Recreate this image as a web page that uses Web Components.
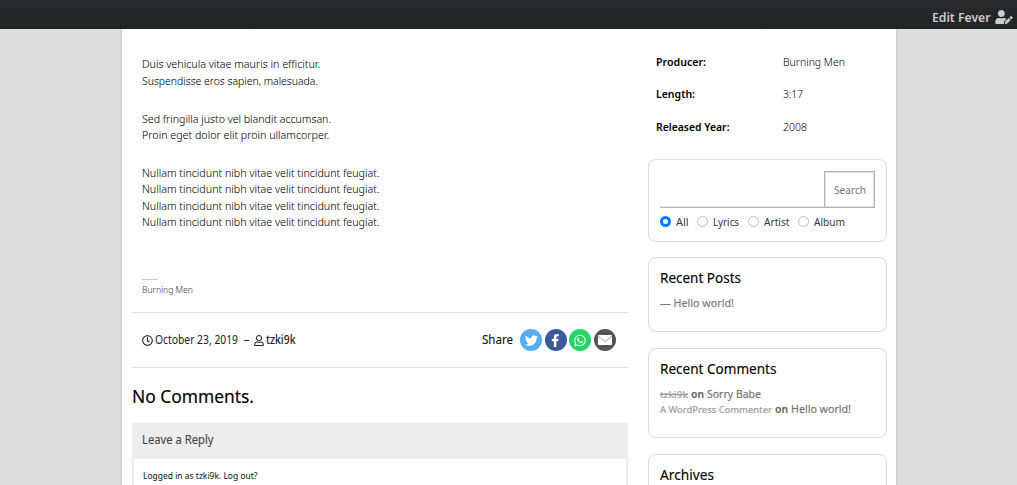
<!DOCTYPE html>
<html lang="en"><head><meta charset="utf-8"><title>Fever</title>
<style>
html,body{margin:0;height:485px;overflow:hidden}
body{font-family:"Noto Sans","Open Sans",sans-serif;background:#dcdcdc;color:#212529}
</style></head><body>
<song-page></song-page>
<script>
const define=(name,html,init)=>customElements.define(name,class extends HTMLElement{
  constructor(){super();this.attachShadow({mode:'open'}).innerHTML=html;}
  connectedCallback(){if(init)init(this,this.shadowRoot);}
});

/* A single line of text condensed to a given measure (data-w). */
define('fit-text','<style>:host{display:block;white-space:nowrap}:host([struck]) span{text-decoration:line-through}span{display:inline-block;transform-origin:0 50%}</style><span><slot></slot></span>',(el,root)=>{
  const s=root.querySelector('span'),w=+el.dataset.w,n=s.getBoundingClientRect().width;
  if(w&&n){s.style.transform='scaleX('+(w/n)+')';s.style.marginRight=(w-n)+'px';}
});

const ICONS={
 clock:['0 0 512 512','M256 8C119 8 8 119 8 256s111 248 248 248 248-111 248-248S393 8 256 8zm0 448c-110.500 0-200-89.500-200-200S145.500 56 256 56s200 89.500 200 200-89.500 200-200 200zm61.800-104.400l-84.900-61.700c-3.100-2.300-4.900-5.900-4.900-9.700V116c0-6.600 5.400-12 12-12h32c6.600 0 12 5.400 12 12v141.700l66.800 48.600c5.400 3.900 6.500 11.400 2.600 16.800L334.600 349c-3.900 5.300-11.400 6.500-16.800 2.600z'],
 user:['0 0 448 512','M313.600 304c-28.700 0-42.500 16-89.600 16-47.100 0-60.800-16-89.600-16C60.200 304 0 364.200 0 438.400V464c0 26.500 21.500 48 48 48h352c26.500 0 48-21.500 48-48v-25.600c0-74.200-60.200-134.400-134.400-134.400zM400 464H48v-25.600c0-47.600 38.800-86.400 86.400-86.400 14.600 0 38.300 16 89.600 16 51.700 0 74.900-16 89.600-16 47.600 0 86.400 38.800 86.400 86.400V464zM224 288c79.500 0 144-64.500 144-144S303.500 0 224 0 80 64.500 80 144s64.500 144 144 144zm0-240c52.900 0 96 43.100 96 96s-43.100 96-96 96-96-43.100-96-96 43.100-96 96-96z'],
 edit:['0 0 640 512','M224 256c70.700 0 128-57.300 128-128S294.700 0 224 0 96 57.300 96 128s57.300 128 128 128zm89.600 32h-16.700c-22.200 10.200-46.900 16-72.900 16s-50.600-5.800-72.900-16h-16.700C60.200 288 0 348.200 0 422.400V464c0 26.500 21.500 48 48 48h274.900c-2.400-6.800-3.400-14-2.600-21.300l6.800-60.900 1.200-11.100 7.900-7.900 77.300-77.300c-24.500-27.700-60-45.500-99.900-45.500zm45.300 145.300l-6.800 61c-1.100 10.200 7.500 18.800 17.600 17.600l60.900-6.800 137.900-137.900-71.700-71.700-137.900 137.800zM633 268.900L595.100 231c-9.300-9.300-24.500-9.300-33.800 0l-37.800 37.800-4.100 4.100 71.800 71.700 41.800-41.800c9.300-9.400 9.300-24.500 0-33.900z'],
 twitter:['0 0 512 512','M459.370 151.716c.325 4.548.325 9.097.325 13.645 0 138.720-105.583 298.558-298.558 298.558-59.452 0-114.680-17.219-161.137-47.106 8.447.974 16.568 1.299 25.340 1.299 49.055 0 94.213-16.568 130.274-44.832-46.132-.975-84.792-31.188-98.112-72.772 6.498.974 12.995 1.624 19.818 1.624 9.421 0 18.843-1.300 27.614-3.573-48.081-9.747-84.143-51.980-84.143-102.985v-1.299c13.969 7.797 30.214 12.670 47.431 13.319-28.264-18.843-46.781-51.005-46.781-87.391 0-19.492 5.197-37.360 14.294-52.954 51.655 63.675 129.300 105.258 216.365 109.807-1.624-7.797-2.599-15.918-2.599-24.040 0-57.828 46.782-104.934 104.934-104.934 30.213 0 57.502 12.670 76.670 33.137 23.715-4.548 46.456-13.320 66.599-25.340-7.798 24.366-24.366 44.833-46.132 57.827 21.117-2.273 41.584-8.122 60.426-16.243-14.292 20.791-32.161 39.308-52.628 54.253z'],
 facebook:['0 0 320 512','M279.140 288l14.220-92.660h-88.910v-60.130c0-25.350 12.420-50.060 52.240-50.060h40.420V6.260S260.430 0 225.360 0c-73.220 0-121.080 44.380-121.080 124.720v70.620H22.890V288h81.390v224h100.170V288z'],
 whatsapp:['0 0 448 512','M380.900 97.100C339 55.100 283.200 32 223.900 32c-122.400 0-222 99.600-222 222 0 39.100 10.200 77.300 29.600 111L0 480l117.700-30.900c32.400 17.700 68.900 27 106.100 27h.1c122.300 0 224.100-99.600 224.100-222 0-59.300-25.200-115-67.100-157zm-157 341.600c-33.200 0-65.700-8.900-94-25.700l-6.700-4-69.800 18.300L72 359.200l-4.400-7c-18.500-29.400-28.200-63.300-28.200-98.200 0-101.700 82.800-184.500 184.600-184.500 49.300 0 95.600 19.200 130.400 54.100 34.800 34.900 56.200 81.200 56.100 130.500 0 101.800-84.900 184.600-186.600 184.600zm101.200-138.200c-5.500-2.800-32.800-16.200-37.900-18-5.100-1.900-8.800-2.800-12.500 2.800-3.700 5.600-14.300 18-17.600 21.800-3.200 3.700-6.500 4.200-12 1.400-32.600-16.300-54-29.100-75.500-66-5.700-9.800 5.700-9.100 16.300-30.300 1.800-3.700.9-6.900-.5-9.700-1.400-2.800-12.500-30.100-17.100-41.200-4.500-10.800-9.100-9.300-12.500-9.500-3.200-.2-6.900-.2-10.600-.2-3.700 0-9.700 1.400-14.800 6.900-5.100 5.600-19.400 19-19.400 46.300 0 27.300 19.900 53.700 22.600 57.400 2.800 3.700 39.100 59.700 94.800 83.800 35.200 15.200 49 16.500 66.600 13.900 10.700-1.600 32.800-13.400 37.400-26.400 4.600-13 4.600-24.100 3.200-26.400-1.300-2.500-5-3.900-10.500-6.600z'],
 mail:['0 0 14 10','M0 1Q0 0 1 0H13Q14 0 14 1L7.600 5.900Q7 6.300 6.400 5.900ZM0 1.500L6.100 6.300Q7 6.900 7.900 6.300L14 1.500V9Q14 10 13 10H1Q0 10 0 9Z']
};
define('ui-icon','<style>:host{display:block;flex:none}svg{display:block;width:100%;height:100%;fill:currentColor}</style><svg><path/></svg>',(el,root)=>{
  const [box,d]=ICONS[el.getAttribute('name')];
  root.querySelector('svg').setAttribute('viewBox',box);root.querySelector('path').setAttribute('d',d);
});

define('admin-bar',`<style>
:host{display:flex;justify-content:flex-end;align-items:center;box-sizing:border-box;height:29px;padding:5px 4px 0 0;background:linear-gradient(#292a2c,#222326);color:#ccc;font-weight:600;font-size:12.700px;line-height:22px}
ui-icon{width:18px;height:14px;margin-left:5px}</style>
<fit-text data-w="58.500">Edit Fever</fit-text><ui-icon name="edit"></ui-icon>`);

define('song-lyrics',`<style>
:host{display:block;padding:27.400px 10.500px 0 10.400px;font-size:11.600px;line-height:16.300px;font-weight:300;-webkit-text-stroke:.05px;color:#000;height:284px;box-sizing:border-box}
p{margin:0 0 21.800px}
footer{margin-top:49px;font-size:9.300px;line-height:20px;color:#444}
footer::before{content:"";display:block;width:16px;height:1px;background:#c8c8c8}</style>
<p><fit-text data-w="178">Duis vehicula vitae mauris in efficitur.</fit-text><fit-text data-w="176">Suspendisse eros sapien, malesuada.</fit-text></p>
<p><fit-text data-w="189">Sed fringilla justo vel blandit accumsan.</fit-text><fit-text data-w="187">Proin eget dolor elit proin ullamcorper.</fit-text></p>
<p style="margin:0"><fit-text data-w="237.500">Nullam tincidunt nibh vitae velit tincidunt feugiat.</fit-text><fit-text data-w="237.500">Nullam tincidunt nibh vitae velit tincidunt feugiat.</fit-text><fit-text data-w="237.500">Nullam tincidunt nibh vitae velit tincidunt feugiat.</fit-text><fit-text data-w="237.500">Nullam tincidunt nibh vitae velit tincidunt feugiat.</fit-text></p>
<footer><fit-text data-w="51">Burning Men</fit-text></footer>`);

define('post-meta',`<style>
:host{display:flex;align-items:center;box-sizing:border-box;height:56px;border:solid #e3e3e3;border-width:1px 0;padding:0 12.500px 0 10.400px;font-size:12px;line-height:16px;color:#212121}
.c{width:11px;height:11px;margin-right:2px}.u{width:10px;height:11px;margin-right:2px}
.d{margin:0 5px}.n{font-weight:500}
.s{margin-left:auto;margin-right:7px;color:#111;-webkit-text-stroke:.1px}
i{display:grid;place-items:center;width:22px;height:22px;border-radius:50%;color:#fff;margin-left:2.400px}
</style><ui-icon class="c" name="clock"></ui-icon><fit-text data-w="83">October 23, 2019</fit-text><span class="d">–</span><ui-icon class="u" name="user"></ui-icon><fit-text class="n" data-w="29.500">tzki9k</fit-text>
<fit-text class="s" data-w="31">Share</fit-text>
<i style="background:#55acee;margin-left:0"><ui-icon name="twitter" style="width:13px;height:13px"></ui-icon></i>
<i style="background:#3b5998"><ui-icon name="facebook" style="width:8.500px;height:13px"></ui-icon></i>
<i style="background:#25d366"><ui-icon name="whatsapp" style="width:12px;height:13px"></ui-icon></i>
<i style="background:#555"><ui-icon name="mail" style="width:14px;height:10px"></ui-icon></i>`);

define('comment-area',`<style>
:host{display:block}
h2{margin:0;padding-top:15px;font-size:18px;line-height:26px;font-weight:400;-webkit-text-stroke:.15px;color:#000;height:40px}
.box{border:2px solid #ededed;box-sizing:border-box;height:90px}
header{height:34px;background:#ededed;font-size:12px;line-height:30px;font-weight:400;-webkit-text-stroke:.1px;color:#444;padding-left:8px}
.in{padding:8px 9px;font-size:9.700px;line-height:18px;color:#111}</style>
<h2><fit-text data-w="122">No Comments.</fit-text></h2>
<div class="box"><header><fit-text data-w="71.500">Leave a Reply</fit-text></header><div class="in"><fit-text data-w="114.500">Logged in as tzki9k. Log out?</fit-text></div></div>`);

define('song-facts',`<style>
:host{display:grid;grid-template-columns:126.500px 1fr;grid-auto-rows:32.400px;align-items:center;padding:16.700px 0 0 8.400px;font-size:11.600px;line-height:16px;height:130px;box-sizing:border-box;color:#000}
b{font-weight:600;font-size:11.300px}span{font-weight:300}</style>
<b><fit-text data-w="50">Producer:</fit-text></b><span><fit-text data-w="62">Burning Men</fit-text></span>
<b><fit-text data-w="39">Length:</fit-text></b><span><fit-text data-w="20">3:17</fit-text></span>
<b><fit-text data-w="73.500">Released Year:</fit-text></b><span><fit-text data-w="24">2008</fit-text></span>`);

define('side-card',`<style>
:host{display:block;box-sizing:border-box;border:1px solid #dadce0;border-radius:8px;padding:11px;margin-bottom:16px}
h3{margin:-1px 0 0;font-weight:400;-webkit-text-stroke:.12px;font-size:13.500px;line-height:20px;height:20px;color:#000}</style><h3><slot name="title"></slot></h3><slot></slot>`);

define('radio-option',`<style>
:host{display:flex;align-items:center}
i{box-sizing:border-box;width:11px;height:11px;border:1px solid #b9c0c7;border-radius:50%;margin-right:5px}
:host([checked]) i{border:3.500px solid #007bff}</style><i></i><slot></slot>`);

define('search-form',`<style>
:host{display:block;font-size:11.500px;color:#333}
.r{display:flex;height:37px}
.q{flex:1;border-bottom:1px solid #b8b8b8;box-shadow:0 -1px #e2e2e2 inset}
button{font:inherit;box-sizing:border-box;width:51px;height:37px;border:1px solid #b2b2b2;box-shadow:inset 0 0 0 1px #e2e2e2;background:#fff;color:#6c757d;padding:0;display:grid;place-items:center}
.o{display:flex;padding-top:5px;line-height:17px}
</style><div class="r"><div class="q"></div><button><fit-text data-w="32">Search</fit-text></button></div>
<div class="o"><radio-option checked style="width:37px"><fit-text data-w="12.500">All</fit-text></radio-option><radio-option style="width:51px"><fit-text data-w="26">Lyrics</fit-text></radio-option><radio-option style="width:50px"><fit-text data-w="25.500">Artist</fit-text></radio-option><radio-option><fit-text data-w="31">Album</fit-text></radio-option></div>`);

define('comment-line',`<style>:host{display:flex;align-items:baseline;gap:3px;height:15px;font-size:11.500px;line-height:15px;font-weight:400;-webkit-text-stroke:.15px;color:#6f6f6f}
::slotted([slot=who]){font-size:9.700px;font-weight:500;color:#a2a2a2}b{font-weight:600;color:#666}</style>
<slot name="who"></slot><b><fit-text data-w="13">on</fit-text></b><slot></slot>`);

define('song-page',`<style>
:host{display:block;height:485px;overflow:hidden}
main{display:grid;grid-template-columns:496px 239px;column-gap:20px;box-sizing:border-box;width:776px;height:456px;margin-left:121px;padding:0 9px 0 10px;background:#fff;border:1px solid #cecece;border-width:0 1px}
</style><admin-bar></admin-bar>
<main><section><song-lyrics></song-lyrics><post-meta style="margin-top:-1px"></post-meta><comment-area></comment-area></section>
<aside><song-facts></song-facts>
<side-card style="height:83px;margin-bottom:15px"><search-form style="margin-top:-19px"></search-form></side-card>
<side-card style="height:75px"><fit-text slot="title" data-w="81">Recent Posts</fit-text><fit-text data-w="74" style="font-size:11.500px;line-height:15px;margin-top:7px;-webkit-text-stroke:.15px;color:#777">— Hello world!</fit-text></side-card>
<side-card style="height:90px"><fit-text slot="title" data-w="116.500">Recent Comments</fit-text><comment-line style="margin-top:7px"><fit-text slot="who" data-w="28" struck>tzki9k</fit-text><fit-text data-w="54">Sorry Babe</fit-text></comment-line><comment-line><fit-text slot="who" data-w="112">A WordPress Commenter</fit-text><fit-text data-w="60">Hello world!</fit-text></comment-line></side-card>
<side-card style="height:90px"><fit-text slot="title" data-w="54">Archives</fit-text></side-card>
</aside></main>`);
</script></body></html>
